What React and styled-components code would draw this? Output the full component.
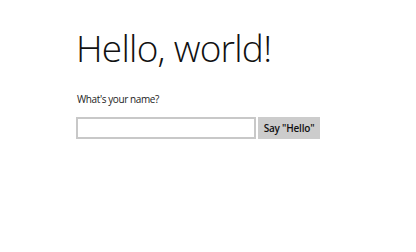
import React from "react";
import styled, { createGlobalStyle } from "styled-components";

const Global = createGlobalStyle`
  html, body { margin: 0; padding: 0; background: #ffffff; }
  body { font-family: "Open Sans", "Noto Sans", sans-serif; color: #000; }
`;

const Page = styled.main`
  padding: 22px 0 0 76px;
  display: flex;
  flex-direction: column;
  align-items: flex-start;
`;

const Title = styled.h1`
  margin: 0;
  font-family: "Open Sans", sans-serif;
  font-weight: 300;
  font-size: 37px;
  line-height: 52px;
  color: #111;
  letter-spacing: -0.75px;
`;

const Label = styled.p`
  margin: 18px 0 0 1px;
  font-size: 10px;
  line-height: 14px;
  color: #222;
  letter-spacing: -0.4px;
`;

const Row = styled.div`
  display: flex;
  gap: 2px;
  margin-top: 11px;
`;

const Input = styled.input`
  box-sizing: border-box;
  width: 180px;
  height: 22px;
  border: 2px solid #c8c8c8;
  background: #fff;
  padding: 0 6px;
  outline: none;
  font: inherit;
`;

const Button = styled.button`
  box-sizing: border-box;
  width: 62px;
  height: 22px;
  border: none;
  background: #cccccc;
  font-family: "Open Sans", sans-serif;
  font-weight: 600;
  font-size: 10px;
  letter-spacing: -0.2px;
  color: #111;
  padding: 0;
`;

export default function App() {
  return (
    <>
      <Global />
      <Page>
        <Title>Hello, world!</Title>
        <Label>What's your name?</Label>
        <Row>
          <Input type="text" />
          <Button>Say "Hello"</Button>
        </Row>
      </Page>
    </>
  );
}
